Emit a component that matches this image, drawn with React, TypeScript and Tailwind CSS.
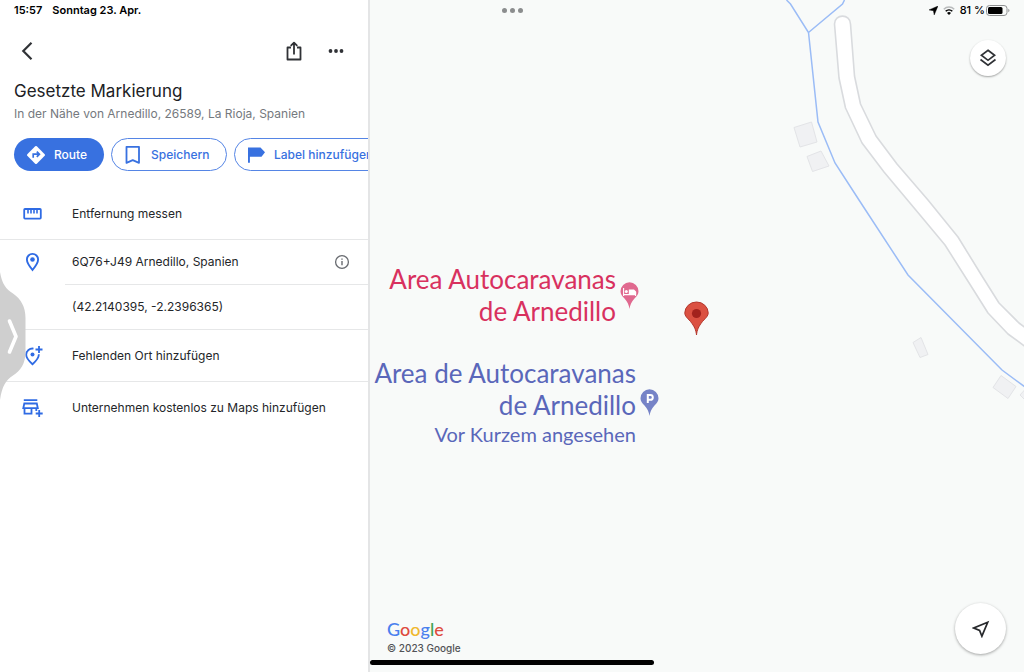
import type { ReactNode } from "react";

function StatusBar() {
  return (
    <header className="pointer-events-none absolute inset-x-0 top-0 z-20 grid h-[21px] grid-cols-3 items-center px-3.5 text-[11px] font-semibold text-black">
      <div className="flex gap-2.5">
        <span>15:57</span>
        <span>Sonntag 23. Apr.</span>
      </div>
      <div className="flex justify-center gap-[3px]">
        <span className="size-[5px] rounded-full bg-[#8b8d8e]" />
        <span className="size-[5px] rounded-full bg-[#8b8d8e]" />
        <span className="size-[5px] rounded-full bg-[#8b8d8e]" />
      </div>
      <div className="flex items-center justify-end gap-[5px] font-medium">
        <svg className="size-[9px]" viewBox="0 0 9 9" aria-hidden="true">
          <path d="M9 0 5.2 9 4.4 4.7 0 3.9Z" fill="#000" stroke="#000" strokeWidth=".4" />
        </svg>
        <svg className="h-[9px] w-3" viewBox="0 0 12 9" fill="none" aria-hidden="true">
          <path d="M.8 3.2a7.4 7.4 0 0 1 10.4 0" stroke="#b9bbbc" strokeWidth="1.5" />
          <path d="M2.7 5.3a4.7 4.7 0 0 1 6.6 0" stroke="#000" strokeWidth="1.6" />
          <path d="M6 9 4 6.9a2.9 2.9 0 0 1 4 0Z" fill="#000" />
        </svg>
        <span className="-mr-1">81 %</span>
        <svg className="h-[11px] w-6" viewBox="0 0 24 11" fill="none" aria-hidden="true">
          <rect x=".5" y=".5" width="20.5" height="10" rx="3" stroke="#8e9091" />
          <rect x="2" y="2" width="14.5" height="7" rx="1.5" fill="#000" />
          <path d="M22.3 3.8c1.5.4 1.5 3 0 3.4Z" fill="#8e9091" />
        </svg>
      </div>
    </header>
  );
}

function RulerIcon() {
  return (
    <svg className="h-5 w-[21px]" viewBox="0 0 21 20" fill="none" stroke="#2f6be4" strokeWidth="1.8" aria-hidden="true">
      <rect x="2.2" y="5" width="16.6" height="9.6" rx=".8" />
      <path d="M6 5.5v4M9 5.500v4M12 5.500v4M15 5.500v4" strokeWidth="1.6" />
    </svg>
  );
}

function PlaceIcon() {
  return (
    <svg className="h-5 w-[21px]" viewBox="0 0 21 20" fill="none" aria-hidden="true">
      <path d="M10.5 18C7 13.800 4.900 10.600 4.900 7.500a5.600 5.600 0 0 1 11.200 0c0 3.100-2.100 6.300-5.600 10.500Z" stroke="#2f6be4" strokeWidth="1.9" />
      <circle cx="10.500" cy="7.500" r="2.300" fill="#2f6be4" />
    </svg>
  );
}

function AddPlaceIcon() {
  return (
    <svg className="h-5 w-[21px]" viewBox="0 0 21 20" fill="none" stroke="#2f6be4" strokeWidth="1.8" aria-hidden="true">
      <path d="M11.500 2.600A6.300 6.300 0 0 0 4.200 8.800c0 2.900 2.300 5.900 6.300 9.400 4-3.500 6.300-6.500 6.300-9.400v-.6" />
      <path d="M17 0v7M13.500 3.500h7" />
      <circle cx="10.500" cy="8.500" r="2" fill="#2f6be4" stroke="none" />
    </svg>
  );
}

function AddBusinessIcon() {
  return (
    <svg className="h-5 w-[21px]" viewBox="0 0 21 20" fill="none" stroke="#2f6be4" strokeWidth="1.800" aria-hidden="true">
      <path d="M1.800 2.200h13.500M2.300 5.500h12.500l1 4.700H1.300ZM2.500 10v5.700h7V10M14.300 10v3M17.200 12v7M13.700 15.500h7" />
    </svg>
  );
}

function ListRow({ icon, label }: { icon: ReactNode; label: string }) {
  return (
    <button type="button" className="flex h-[51px] w-full items-center text-left">
      <span className="flex w-[72px] shrink-0 pl-[22px]">{icon}</span>
      <span>{label}</span>
    </button>
  );
}

function PlacePanel() {
  return (
    <aside className="relative flex w-[370px] shrink-0 flex-col overflow-hidden border-r-2 border-[#e4e5e6] bg-white pt-[34px]">
      <nav className="flex h-[33px] items-center pr-4 pl-[11px]">
        <button type="button" aria-label="Zurück" className="mr-auto flex size-8 items-center justify-center">
          <svg className="h-5 w-3" viewBox="0 0 12 20" fill="none" aria-hidden="true">
            <path d="m10.500 1.800-8.200 8.200 8.200 8.200" stroke="#303236" strokeWidth="2.200" />
          </svg>
        </button>
        <button type="button" aria-label="Teilen" className="mr-2.5 flex size-8 items-center justify-center">
          <svg className="h-5 w-4" viewBox="0 0 16 20" fill="none" stroke="#303236" strokeWidth="1.800" strokeLinejoin="round" aria-hidden="true">
            <path d="M5 6.500H1.500v12h13v-12H11M8 13.500V1.800M4.700 4.900 8 1.600l3.300 3.300" />
          </svg>
        </button>
        <button type="button" aria-label="Mehr" className="flex size-8 items-center justify-center">
          <svg className="h-1 w-4" viewBox="0 0 16 4" fill="#303236" aria-hidden="true">
            <circle cx="2.500" cy="2" r="1.900" />
            <circle cx="8" cy="2" r="1.900" />
            <circle cx="13.500" cy="2" r="1.900" />
          </svg>
        </button>
      </nav>

      <div className="mt-3 pl-3.5">
        <h1 className="text-[17px] leading-6 text-[#202124]">Gesetzte Markierung</h1>
        <p className="text-[12px] leading-[22px] text-[#75797e]">In der Nähe von Arnedillo, 26589, La Rioja, Spanien</p>
      </div>

      <div className="mt-[13px] flex gap-[7px] overflow-hidden pl-3.5 text-[12px] font-medium whitespace-nowrap">
        <button type="button" className="flex h-[33px] w-[90px] shrink-0 items-center gap-2 rounded-full bg-[#3871e0] pl-3 text-white">
          <svg className="size-5" viewBox="0 0 20 20" aria-hidden="true">
            <path d="M9.200 1.300a1.200 1.200 0 0 1 1.600 0l7.900 7.900a1.200 1.200 0 0 1 0 1.600l-7.900 7.900a1.200 1.200 0 0 1-1.600 0l-7.900-7.900a1.200 1.200 0 0 1 0-1.600Z" fill="#fff" />
            <path d="M7.200 12.800V9.200h5.300M10.800 6.600l2.600 2.600-2.600 2.600" fill="none" stroke="#3871e0" strokeWidth="1.700" />
          </svg>
          Route
        </button>
        <button type="button" className="flex h-[33px] w-[116px] shrink-0 items-center gap-2.5 rounded-full border border-[#5585e5] pl-[13px] text-[#3871e0]">
          <svg className="h-5 w-4" viewBox="0 0 16 20" fill="none" aria-hidden="true">
            <path d="M1.500 1.800h12.500v16l-6.250-2.700L1.500 17.800Z" stroke="#3871e0" strokeWidth="1.800" strokeLinejoin="round" />
          </svg>
          Speichern
        </button>
        <button type="button" className="flex h-[33px] shrink-0 items-center gap-2 rounded-full border border-[#5585e5] pr-4 pl-[13px] text-[#3871e0]">
          <svg className="h-4 w-[18px]" viewBox="0 0 18 16" fill="#3871e0" aria-hidden="true">
            <path d="M0 .500h12.500L17 5.200l-3.500 4.600H1.900v6H0Z" />
          </svg>
          Label hinzufügen
        </button>
      </div>

      <div className="mt-[17px] text-[12px] text-[#242629]">
        <ListRow icon={<RulerIcon />} label="Entfernung messen" />
        <div className="border-y border-[#e6e7e8]">
          <div className="flex h-11 items-center">
            <span className="flex w-[72px] shrink-0 pl-[22px]"><PlaceIcon /></span>
            <span className="mr-auto">6Q76+J49 Arnedillo, Spanien</span>
            <button type="button" aria-label="Info" className="mr-[18px]">
              <svg className="size-4" viewBox="0 0 16 16" fill="none" aria-hidden="true">
                <circle cx="8" cy="8" r="6.400" stroke="#686b70" strokeWidth="1.300" />
                <path d="M8 7v4.300M8 4.500v1.300" stroke="#686b70" strokeWidth="1.400" />
              </svg>
            </button>
          </div>
          <div className="ml-[65px] flex h-[45px] items-center border-t border-[#e6e7e8] pl-[7px]">(42.2140395, -2.2396365)</div>
        </div>
        <ListRow icon={<AddPlaceIcon />} label="Fehlenden Ort hinzufügen" />
        <div className="border-t border-[#e6e7e8]">
          <ListRow icon={<AddBusinessIcon />} label="Unternehmen kostenlos zu Maps hinzufügen" />
        </div>
      </div>

      <button type="button" aria-label="Seitenleiste öffnen" className="absolute top-[272px] left-0">
        <svg className="h-[128px] w-[26px]" viewBox="0 0 26 128" fill="none" aria-hidden="true">
          <path d="M0 0C2 12 6 17 13 21.500 21 27 25.500 35 25.500 46v34c0 11-4.500 18.500-12.500 23.500C6 108 2 114 0 128Z" fill="#cfcfcf" />
          <path d="m9.500 49 6.500 15.500L9.500 80" stroke="#fff" strokeWidth="3.600" strokeLinecap="round" strokeLinejoin="round" />
        </svg>
      </button>
    </aside>
  );
}

function MapCanvas() {
  return (
    <svg className="absolute inset-0 h-full w-full" viewBox="370 0 654 672" preserveAspectRatio="xMinYMin slice" fill="none" aria-hidden="true">
      <g fill="#f0f1f3" stroke="#e3e4e7">
        <path d="m794 127.500 17.500-5.500 5.500 20-17 5Z" />
        <path d="m807 156.500 14-5.500 8 15-16.500 5.500Z" />
        <path d="m913 342.500 8-5 7 17-8 3Z" />
        <path d="m1001 375.500 15 11-8 12-15-11Z" />
        <path d="m1029 385-9 10 8 8Z" />
      </g>
      <path
        d="M834.500 24c0-10.500 16-10.500 16 0l4 52 6 28 15.500 32 21 28 31 36 30 37 24 39 17 27 20 20 11 8v19l-22-16-20-21-17-27-26-41-25-30-36-43-22-29-16.500-35-6.500-30Z"
        fill="#fff"
        stroke="#d9dbde"
        strokeWidth="1.600"
        strokeLinejoin="round"
      />
      <path d="m786.500 0 4 4 18 28.500 9.500 89.500 17 41 24 37 49 75 94 95 23 17M844.500 0l-2 4-34 28.500" stroke="#9bbcf6" strokeWidth="1.500" />
    </svg>
  );
}

function MapPane() {
  return (
    <main className="relative min-w-0 flex-1 overflow-hidden bg-[#f8faf9]">
      <MapCanvas />

      <div className="absolute top-[263px] right-[385px] flex items-center gap-1">
        <p className="text-right font-['Lato',sans-serif] text-[26px] leading-8 whitespace-nowrap text-[#d8315f]">
          Area Autocaravanas<br />de Arnedillo
        </p>
        <svg className="h-[27px] w-[19px]" viewBox="0 0 19 27" aria-hidden="true">
          <path d="M9.500 27C9 23 7.500 20 4.500 16.500 2 14 .5 12 .5 9.300a9 9 0 0 1 18 0c0 2.700-1.500 4.700-4 7.200-3 3.500-4.500 6.500-5 10.500Z" fill="#e0698f" />
          <path d="M3.600 6v8M15.600 14v-4M3.600 12.600h12" fill="none" stroke="#fff" strokeWidth="1.100" />
          <path d="M8.800 7.500H14l2.100 2V12H8.800Z" fill="#fff" />
          <circle cx="6.300" cy="9.500" r="1.500" fill="#fff" />
        </svg>
      </div>

      <svg className="absolute top-[301px] left-[314px] h-[35px] w-[25px]" viewBox="0 0 25 35" aria-label="Gesetzte Markierung" role="img">
        <path d="M12.500 34C12 29 10.500 25.500 6.500 20.500 3 16.500.8 15 .8 12a11.700 11 0 0 1 23.400 0c0 3-2.200 4.500-5.700 8.500-4 5-5.500 8.500-6 13.500Z" fill="#db5142" stroke="#b3382e" />
        <circle cx="12.500" cy="12.500" r="4.600" fill="#a2221d" />
      </svg>

      <div className="absolute top-[357px] right-[365px] flex items-start gap-1 text-[#5a67ba]">
        <div className="text-right font-['Lato',sans-serif] text-[26px] leading-8 whitespace-nowrap">
          <p>Area de Autocaravanas<br />de Arnedillo</p>
          <p className="text-[20px] leading-[26px]">Vor Kurzem angesehen</p>
        </div>
        <svg className="mt-8 h-[27px] w-[19px]" viewBox="0 0 19 27" aria-hidden="true">
          <path d="M9.500 27C9 23 7.500 20 4.500 16.500 2 14 .5 12 .5 9.300a9 9 0 0 1 18 0c0 2.700-1.500 4.700-4 7.200-3 3.500-4.500 6.500-5 10.500Z" fill="#7683c7" />
          <path d="M7.800 14V6h2.600a2.300 2.300 0 0 1 0 4.800H8" fill="none" stroke="#fff" strokeWidth="2" />
        </svg>
      </div>

      <button type="button" aria-label="Kartenebenen" className="absolute top-10 right-[18px] flex size-9 items-center justify-center rounded-full bg-white shadow-[0_1px_2px_rgba(0,0,0,0.35)]">
        <svg className="size-[18px]" viewBox="0 0 18 18" fill="none" stroke="#303236" strokeWidth="1.700" aria-hidden="true">
          <path d="m9 1.200 6.600 5L9 11.300l-6.600-5.100ZM1.500 10.500 9 16.200l7.500-5.700" />
        </svg>
      </button>

      <button type="button" aria-label="Mein Standort" className="absolute right-[18px] bottom-[18px] flex size-[51px] items-center justify-center rounded-full bg-white shadow-[0_1px_3px_rgba(0,0,0,0.35)]">
        <svg className="size-[18px]" viewBox="0 0 18 18" fill="none" aria-hidden="true">
          <path d="M15.700 2.300 1.800 8l5.800 2.400L9.900 16.200Z" stroke="#27292c" strokeWidth="1.700" />
        </svg>
      </button>

      <footer className="absolute bottom-4 left-[17px]">
        <p className="pb-px font-['Lato',sans-serif] text-[18px] leading-5 font-medium">
          <span className="text-[#4a80ee]">G</span>
          <span className="text-[#de4b3e]">o</span>
          <span className="text-[#f0b82e]">o</span>
          <span className="text-[#4a80ee]">g</span>
          <span className="text-[#3fa457]">l</span>
          <span className="text-[#de4b3e]">e</span>
        </p>
        <small className="block text-[10px] leading-4 font-medium text-[#515356]">© 2023 Google</small>
      </footer>
    </main>
  );
}

export default function App() {
  return (
    <div className="relative flex min-h-screen overflow-hidden bg-white font-['Inter',sans-serif]">
      <StatusBar />
      <PlacePanel />
      <MapPane />
      <div className="absolute inset-x-0 bottom-[7px] flex justify-center">
        <span className="h-[5px] w-[284px] rounded-full bg-black" />
      </div>
    </div>
  );
}
